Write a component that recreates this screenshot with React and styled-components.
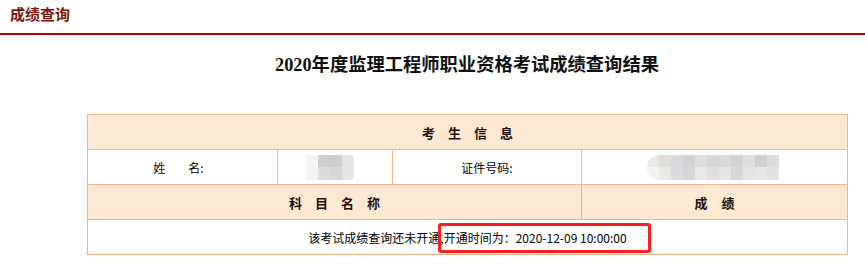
import React from 'react';
import styled, { createGlobalStyle } from 'styled-components';

const GlobalStyle = createGlobalStyle`
  html, body {
    margin: 0;
    padding: 0;
    background: #ffffff;
    font-family: "Noto Sans CJK SC", "Liberation Sans", sans-serif;
    color: #000;
  }
`;

const TopBar = styled.div`
  height: 33px;
  border-bottom: 2px solid #c00000;
  display: flex;
  align-items: center;
  padding-left: 10px;
  box-sizing: content-box;
`;

const TopTitle = styled.h1`
  margin: 0 0 6px;
  font-size: 15px;
  font-weight: bold;
  color: #7a1508;
  line-height: 1;
`;

const Main = styled.div`
  width: 760px;
  margin-left: 87px;
  padding-top: 16px;
`;

const Heading = styled.h2`
  margin: 0;
  height: 28px;
  line-height: 28px;
  text-align: center;
  font-family: "Liberation Serif", "Noto Sans CJK SC", serif;
  font-size: 18.3px;
  font-weight: bold;
  color: #111;
`;

const TableWrap = styled.div`
  position: relative;
  margin-top: 35px;
`;

const Table = styled.table`
  width: 760px;
  border-collapse: collapse;
  table-layout: fixed;
  font-size: 12px;
`;

const Row = styled.tr`
  height: 35px;
  background: ${p => (p.$head ? '#fde9d1' : '#ffffff')};
`;

const Cell = styled.td`
  border: 1px solid #efb48a;
  padding: 0;
  text-align: center;
  vertical-align: middle;
  font-weight: ${p => (p.$bold ? 'bold' : 'normal')};
  font-size: ${p => (p.$bold ? '13px' : '12px')};
  color: ${p => (p.$bold ? '#1c1010' : '#000')};
`;

const Spaced = styled.span`
  display: inline-flex;
  gap: ${p => p.$gap}px;
  justify-content: center;
`;

const Mosaic = styled.div`
  display: inline-grid;
  grid-template-columns: repeat(${p => p.$cols}, 12px);
  grid-auto-rows: 12.5px;
  border-radius: ${p => (p.$round ? '12px 0 0 12px' : '3px')};
  overflow: hidden;
  vertical-align: middle;
  filter: blur(0.4px);
  margin-left: ${p => p.$shift}px;
`;

const Tile = styled.div``;

const Callout = styled.div`
  position: absolute;
  left: 351px;
  top: 109px;
  width: 207px;
  height: 24px;
  border: 3px solid #ff1c1c;
  border-radius: 3px;
  pointer-events: none;
`;

const nameTiles = [
  '#f4f4f4', '#cfcfcf', '#cecece', '#e4e4e4',
  '#f3f3f3', '#dcdcdc', '#d8d8d8', '#e6e6e6',
];

const idTiles = [
  '#e8e8e8', '#e1dfdc', '#d8d9dc', '#d2d3d3', '#e0dedd', '#d6d7d9', '#dadadb', '#d3d3d3', '#dedfe0', '#d0d0d2', '#dcdcdf',
  '#f2f2f2', '#e8e8e6', '#dcdcde', '#d6d7d8', '#e8e8e8', '#e1e0df', '#e4e6e6', '#d8d8d8', '#e4e4e6', '#e6e6e8', '#e2e2e4',
];

const SpacedText = ({ text, gap }) => (
  <Spaced $gap={gap}>
    {text.split('').map((ch, i) => (
      <span key={i}>{ch}</span>
    ))}
  </Spaced>
);

const Blur = ({ tiles, cols, round, shift }) => (
  <Mosaic $cols={cols} $round={round} $shift={shift}>
    {tiles.map((c, i) => (
      <Tile key={i} style={{ background: c }} />
    ))}
  </Mosaic>
);

const App = () => (
  <>
    <GlobalStyle />
    <TopBar>
      <TopTitle>成绩查询</TopTitle>
    </TopBar>
    <Main>
      <Heading>2020年度监理工程师职业资格考试成绩查询结果</Heading>
      <TableWrap>
        <Table>
          <colgroup>
            <col style={{ width: 190 }} />
            <col style={{ width: 115 }} />
            <col style={{ width: 189 }} />
            <col style={{ width: 266 }} />
          </colgroup>
          <tbody>
            <Row $head>
              <Cell colSpan={4} $bold>
                <SpacedText text="考生信息" gap={13} />
              </Cell>
            </Row>
            <Row>
              <Cell>
                <Spaced $gap={23} style={{ marginRight: 8 }}>
                  <span>姓</span>
                  <span>名:</span>
                </Spaced>
              </Cell>
              <Cell>
                <Blur tiles={nameTiles} cols={4} shift={-10} />
              </Cell>
              <Cell>证件号码:</Cell>
              <Cell>
                <Blur tiles={idTiles} cols={11} round shift={-3} />
              </Cell>
            </Row>
            <Row $head>
              <Cell colSpan={3} $bold>
                <SpacedText text="科目名称" gap={13} />
              </Cell>
              <Cell $bold>
                <SpacedText text="成绩" gap={14} />
              </Cell>
            </Row>
            <Row>
              <Cell colSpan={4}>该考试成绩查询还未开通,开通时间为：2020-12-09 10:00:00</Cell>
            </Row>
          </tbody>
        </Table>
        <Callout />
      </TableWrap>
    </Main>
  </>
);

export default App;
